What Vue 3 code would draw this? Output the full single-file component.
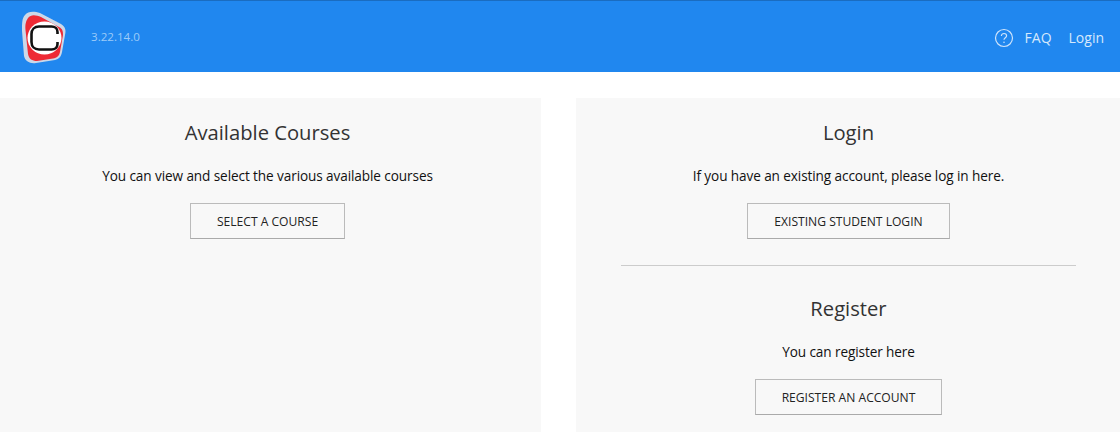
<script setup>
const version = '3.22.14.0'
</script>

<template>
  <div class="page">
    <header class="topbar">
      <div class="brand">
        <svg class="logo" width="50" height="56" viewBox="0 0 50 56">
          <path d="M7 6 C10 2 16 2 22 4 L43 15 C48 18 48 22 47 26 L44 43 C43 48 41 50 37 51 L18 54 C12 55 7 52 6 47 L4 22 C4 14 4 9 7 6 Z" fill="#ccd8e8"/>
          <path d="M10 9 C13 5 18 6 23 8 L41 18 C45 20 45 23 45 26 L42 43 C41 47 39 49 35 49.5 L19 52 C14 52 11 50 10 45 L7.5 21 C7 15 8 12 10 9 Z" fill="#ee2a35"/>
          <ellipse cx="26.5" cy="29" rx="17" ry="16.5" fill="#fff"/>
          <path d="M39.5 25 V23 C39.5 19.5 37 17.5 33.5 17.5 H21 C16.5 17.5 13.5 20.5 13.5 25 V33 C13.5 37.5 16.5 40.5 21 40.5 H33.5 C37 40.5 39.5 38.5 39.5 35 V33" fill="none" stroke="#111" stroke-width="2.6"/>
        </svg>
        <span class="version">{{ version }}</span>
      </div>
      <nav class="links">
        <svg class="help" width="20" height="20" viewBox="0 0 20 20">
          <circle cx="10" cy="10" r="8.5" fill="none" stroke="#cfe4fb" stroke-width="1.2"/>
          <path d="M7.4 8 C7.4 6.4 8.6 5.5 10 5.5 C11.5 5.5 12.6 6.5 12.6 7.8 C12.6 9.6 10 9.8 10 11.8" fill="none" stroke="#cfe4fb" stroke-width="1.2"/>
          <circle cx="10" cy="14.2" r="0.8" fill="#cfe4fb"/>
        </svg>
        <a class="link">FAQ</a>
        <a class="link">Login</a>
      </nav>
    </header>

    <main class="panels">
      <section class="panel panel-left">
        <h2>Available Courses</h2>
        <p>You can view and select the various available courses</p>
        <button class="btn">SELECT A COURSE</button>
      </section>
      <section class="panel">
        <h2>Login</h2>
        <p>If you have an existing account, please log in here.</p>
        <button class="btn">EXISTING STUDENT LOGIN</button>
        <hr />
        <h2>Register</h2>
        <p>You can register here</p>
        <button class="btn">REGISTER AN ACCOUNT</button>
      </section>
    </main>
  </div>
</template>

<style>
html, body { overflow: hidden; background: #fff; }
</style>

<style scoped>
.page {
  height: 432px;
  overflow: hidden;
  font-family: "Open Sans", "Noto Sans", sans-serif;
  color: #111;
}

.topbar {
  height: 72px;
  box-sizing: border-box;
  background: #2087ef;
  border-top: 1px solid #1a6cc0;
  display: flex;
  align-items: flex-start;
  justify-content: space-between;
}

.brand {
  display: flex;
  align-items: flex-start;
  padding: 8px 0 0 18px;
}

.logo { flex-shrink: 0; }

.version {
  margin: 21px 0 0 23px;
  font-size: 11.6px;
  line-height: 14px;
  color: #9ccbf9;
}

.links {
  display: flex;
  align-items: center;
  height: 72px;
  padding: 0 16px 0 0;
}

.help { margin-right: 11px; margin-top: 2px; }

.link {
  font-size: 14px;
  color: #d5e8fc;
  margin-right: 17px;
}
.link:last-child { margin-right: 0; }

.panels {
  display: grid;
  grid-template-columns: 541px 544px;
  justify-content: space-between;
  padding-top: 26px;
}

.panel {
  background: #f8f8f8;
  height: 334px;
  padding: 0 44px 0 45px;
  box-sizing: border-box;
  display: flex;
  flex-direction: column;
  align-items: center;
  text-align: center;
}

.panel-left { padding: 0 51px 0 45px; }

h2 {
  margin: 19px 0 0;
  font-size: 20.2px;
  line-height: 30px;
  font-weight: 400;
  color: #333;
}

p {
  margin: 19px 0 0;
  font-size: 13.6px;
  letter-spacing: -0.1px;
  line-height: 20px;
}

.btn {
  margin-top: 17px;
  height: 36px;
  padding: 0 26px;
  background: transparent;
  border: 1px solid #bbb;
  border-bottom-color: #aaa;
  font: inherit;
  font-size: 12.1px;
  color: #222;
}

hr {
  width: 100%;
  margin: 26px 0 0;
  border: 0;
  border-top: 1px solid #ccc;
}

hr + h2 { margin-top: 27px; }
</style>
